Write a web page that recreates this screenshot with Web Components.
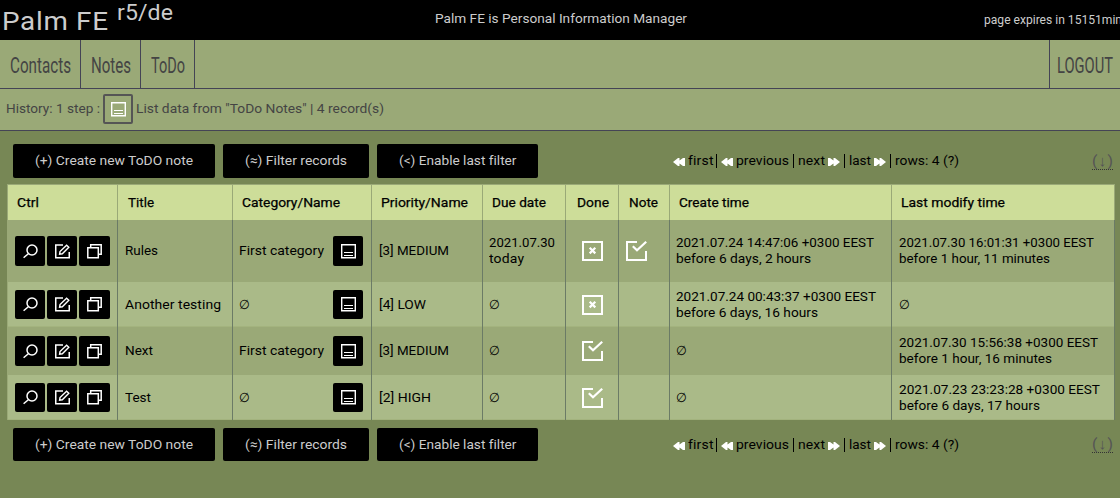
<!DOCTYPE html>
<html lang="en">
<head>
<meta charset="utf-8">
<title>Palm FE</title>
<style>
html{height:100%}
body{margin:0;min-height:100%;background:#778755;color:#000;font:13.3px/16px Roboto,"Noto Sans",sans-serif;overflow:hidden}
</style>
</head>
<body>
<palm-app></palm-app>
<script>
const define=(name,html,setup)=>customElements.define(name,class extends HTMLElement{
  connectedCallback(){
    if(this.shadowRoot)return;
    this.attachShadow({mode:'open'}).innerHTML=typeof html==='function'?html(this):html;
    if(setup)setup(this);
  }
});

/* A run of text fitted to a given measure: widened slightly, then tracked. */
define('fit-text',`<style>:host{display:inline-block;white-space:pre;flex:none;text-align:left}span{display:inline-block;transform-origin:0 50%}</style><span><slot></slot></span>`,el=>{
  const s=el.shadowRoot.querySelector('span'),w=+el.getAttribute('w'),n=el.textContent.length;
  const natural=s.getBoundingClientRect().width;
  el.style.width=w+'px';
  const ratio=w/natural;
  const scale=el.hasAttribute('condensed')?ratio:Math.min(1.05,Math.max(.95,ratio));
  s.style.transform=`scaleX(${scale})`;
  s.style.letterSpacing=(w/scale-natural)/Math.max(1,n-1)+'px';
});

const icons={
  search:['0 0 15 15','<circle cx="9" cy="6" r="5" stroke-width="1.5"/><path d="M5.3 9.7 0.6 13.8" stroke-width="1.5"/>'],
  edit:['0 0 15 15','<path d="M8 1H.75V13.75H14.25V8" stroke-width="1.5"/><path d="M4.6 10.2 5 7.6 11.6 1.2 13.8 3.3 7.3 9.8Z" stroke-width="1.4"/>'],
  copy:['0 0 15 15','<path d="M3.7 3.5V.8H14.2V10.2H11.5" stroke-width="1.5"/><path d="M.8 3.7H11.3V13.8H.8Z" stroke-width="1.5"/>'],
  note:['0 0 15 15','<path d="M.7 .7H14.3V13.8H.7Z" stroke-width="1.4"/><path d="M3 8.5H12M3 11.5H12" stroke-width="1.2"/>'],
  check:['0 0 21 20','<path d="M11 1H1V19H20V10" stroke-width="2"/><path d="M6.8 5.3 11 9.3 20.2 .8" stroke-width="2.2"/>'],
  cross:['0 0 21 20','<path d="M1 1H20V19H1Z" stroke-width="2"/><path d="M7.7 6.8 13.3 12.4M13.3 6.8 7.7 12.4" stroke-width="2.2"/>'],
  back:['0 0 12 10','<path d="M0 5 5 1 6.5 1V3.6L10 1H12V9H10L6.5 6.4V9H5Z" fill="#fff" stroke="none"/>'],
  forward:['0 0 12 10','<path d="M12 5 7 1 5.5 1V3.6L2 1H0V9H2L5.5 6.4V9H7Z" fill="#fff" stroke="none"/>']
};
define('palm-icon',el=>{
  const [box,shape]=icons[el.getAttribute('name')],[,,w,h]=box.split(' ');
  return `<style>:host{display:block;flex:none;width:${w}px;height:${h}px}svg{display:block}</style><svg width="${w}" height="${h}" viewBox="${box}" fill="none" stroke="#fff">${shape}</svg>`;
});

define('icon-button',el=>`<style>:host{display:grid;place-items:center;box-sizing:border-box;flex:none;width:30px;height:var(--button-height,30px);background:#000;border-radius:2px}:host([outline]){background:none;border:2px solid #555}:host([wide]){width:31px}</style><palm-icon name="${el.getAttribute('icon')}"></palm-icon>`);

define('text-button',`<style>:host{display:flex;align-items:center;justify-content:center;box-sizing:border-box;height:100%;padding:0 22px;background:#000;color:#ccc;border-radius:2px}</style><slot></slot>`);

define('top-bar',`<style>
:host{display:grid;grid-template-columns:432px 1fr 136px;height:40px;background:#000;color:#ccc;overflow:hidden}
.brand{display:flex;padding-left:2px;gap:9px}
.name{font-size:26.5px;line-height:31px;margin-top:5px}
.version{font-size:22px;line-height:26px;margin-top:0}
.center{padding:11px 0 0 3px}
.expires{padding-top:12px;font-size:12.2px}
</style>
<div class="brand"><fit-text class="name" w="106">Palm FE</fit-text><fit-text class="version" w="56">r5/de</fit-text></div>
<div class="center"><fit-text w="252">Palm FE is Personal Information Manager</fit-text></div>
<div class="expires"><fit-text w="138">page expires in 15151min</fit-text></div>`);

define('nav-bar',`<style>
:host{display:flex;height:48px;background:#9aa977;border-bottom:1px solid #444455;color:#444;font-size:21.5px;line-height:49px}
a{box-sizing:border-box;padding:1px 9px 0 10px;border-right:1px solid #444455}
.logout{margin-left:auto;border-right:0;border-left:1px solid #444455;padding:1px 7px 0}
</style>
<a><fit-text condensed w="61">Contacts</fit-text></a><a><fit-text condensed w="40">Notes</fit-text></a><a><fit-text condensed w="34">ToDo</fit-text></a><a class="logout"><fit-text condensed w="56">LOGOUT</fit-text></a>`);

define('history-bar',`<style>
:host{display:flex;align-items:center;height:41px;box-sizing:border-box;padding:0 6px 1px;background:#9aa977;color:#444;box-shadow:0 1px #444455;margin-bottom:1px}
icon-button{margin:0 3px 0 3px}
</style><fit-text w="94">History: 1 step :</fit-text><icon-button icon="note" outline></icon-button><fit-text w="248">List data from "ToDo Notes" | 4 record(s)</fit-text>`);

define('action-bar',`<style>
:host{display:flex;align-items:center;height:var(--bar-height,34px);padding:0 7px 0 13px}
.actions{display:flex;gap:8px;width:660px;height:100%}
.pager{display:flex;align-items:center}
.pager palm-icon{margin-top:2px}
i{width:1px;height:14px;background:#000;margin:0 4px}
.more{margin-left:auto;color:#555;border-bottom:1px dotted #333;line-height:15px;margin-top:1px;font-size:15px}
</style>
<div class="actions"><text-button><fit-text w="158">(+) Create new ToDO note</fit-text></text-button><text-button><fit-text w="102">(≈) Filter records</fit-text></text-button><text-button><fit-text w="117">(&lt;) Enable last filter</fit-text></text-button></div>
<div class="pager">
<palm-icon name="back"></palm-icon><fit-text w="25" style="margin-left:3px">first</fit-text><i style="margin-left:3px"></i>
<palm-icon name="back"></palm-icon><fit-text w="53" style="margin-left:3px">previous</fit-text><i></i>
<fit-text w="27">next</fit-text><palm-icon name="forward" style="margin-left:3px"></palm-icon><i></i>
<fit-text w="22">last</fit-text><palm-icon name="forward" style="margin-left:3px"></palm-icon><i></i>
<fit-text w="64">rows: 4 (?)</fit-text>
</div>
<fit-text class="more" w="21">(↓)</fit-text>`);

define('data-row',`<style>
:host{display:grid;grid-template-columns:110px 115px 139px 111px 83px 53px 51px 222px 223px;box-sizing:border-box;background:#9aa977;--line:#6b7b66}
:host([even]){background:#aaba88;box-shadow:inset 0 -1px #a3b37e}
:host([head]){background:#cddd99;--line:#9aa977;-webkit-text-stroke:.25px #000}
</style><slot></slot>`);
define('data-cell',`<style>
:host{display:flex;align-items:center;box-sizing:border-box;border-right:1px solid var(--line);padding-left:var(--inset,7px);gap:2px}
:host([lines]){flex-direction:column;align-items:flex-start;justify-content:center;gap:0}
</style><slot></slot>`);

const cell=(body,inset=7,attr='')=>`<data-cell ${attr} style="--inset:${inset}px">${body}</data-cell>`;
const fit=(t,w)=>`<fit-text w="${w}">${t}</fit-text>`;
const empty='<fit-text w="10">∅</fit-text>';
const lines=(...p)=>p.map(([t,w])=>fit(t,w)).join('');
const controls='<icon-button icon="search"></icon-button><icon-button icon="edit"></icon-button><icon-button icon="copy" wide></icon-button>';
const noteButton='<icon-button icon="note" style="margin:0 8px 0 auto"></icon-button>';
const icon=n=>`<palm-icon name="${n}"></palm-icon>`;
const row=r=>`<data-row ${r.even?'even':''} style="height:${r.h}px;--button-height:${r.b}px">${[
  cell(controls),cell(fit(...r.title)),cell((r.cat?fit('First category',85):empty)+noteButton,6),cell(fit(...r.priority)),
  cell(r.due?lines(...r.due):empty,6,r.due?'lines':''),cell(icon(r.done),16),cell(r.note?icon('check'):'',7),
  cell(r.created?lines(...r.created):empty,6,r.created?'lines':''),cell(r.changed?lines(...r.changed):empty,7,r.changed?'lines':'')].join('')}</data-row>`;
const rows=[
 {h:62,b:30,title:['Rules',33],cat:1,priority:['[3] MEDIUM',70],due:[['2021.07.30',66],['today',35]],done:'cross',note:1,created:[['2021.07.24 14:47:06 +0300 EEST',198],['before 6 days, 2 hours',135]],changed:[['2021.07.30 16:01:31 +0300 EEST',195],['before 1 hour, 11 minutes',151]]},
 {h:45,b:29,even:1,title:['Another testing',96],priority:['[4] LOW',47],done:'cross',created:[['2021.07.24 00:43:37 +0300 EEST',200],['before 6 days, 16 hours',142]]},
 {h:48,b:30,title:['Next',28],cat:1,priority:['[3] MEDIUM',70],done:'check',changed:[['2021.07.30 15:56:38 +0300 EEST',199],['before 1 hour, 16 minutes',153]]},
 {h:45,b:29,even:1,title:['Test',26],priority:['[2] HIGH',52],done:'check',changed:[['2021.07.23 23:23:28 +0300 EEST',201],['before 6 days, 17 hours',141]]}
];
const head=[['Ctrl',22,9],['Title',26,10],['Category/Name',98,9],['Priority/Name',87,9],['Due date',54,9],['Done',32,11],['Note',29,10],['Create time',70,9],['Last modify time',104,9]];
define('data-table',`<style>
:host{display:block;margin:0 5px 0 7px;border:1px solid #9aa977;border-bottom:0;border-right:0}
</style><data-row head style="height:35px">${head.map(([t,w,i])=>cell(fit(t,w),i)).join('')}</data-row>${rows.map(row).join('')}`);

define('palm-app',`<style>
:host{display:block}
main{display:flex;flex-direction:column;gap:6px;padding-top:13px}
.bottom{--bar-height:33px;margin-top:2px}
</style>
<top-bar></top-bar><nav-bar></nav-bar><history-bar></history-bar>
<main><action-bar></action-bar><data-table></data-table><action-bar class="bottom"></action-bar></main>`);
</script>
</body>
</html>
